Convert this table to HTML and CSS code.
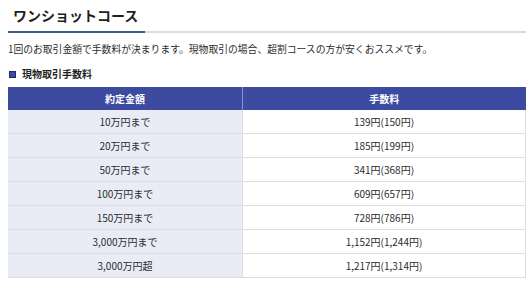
FILE: index.html
```html
<!DOCTYPE html>
<html lang="ja">
<head>
<meta charset="utf-8">
<link rel="stylesheet" href="styles.css">
</head>
<body>
<div class="page">
  <h2 class="title">ワンショットコース</h2>
  <p class="lead">1回のお取引金額で手数料が決まります。現物取引の場合、超割コースの方が安くおススメです。</p>
  <h3 class="sub"><span class="sq"></span>現物取引手数料</h3>
  <table class="fees">
    <thead>
      <tr><th class="c1">約定金額</th><th class="c2">手数料</th></tr>
    </thead>
    <tbody>
      <tr><td class="c1">10万円まで</td><td class="c2">139円(150円)</td></tr>
      <tr><td class="c1">20万円まで</td><td class="c2">185円(199円)</td></tr>
      <tr><td class="c1">50万円まで</td><td class="c2">341円(368円)</td></tr>
      <tr><td class="c1">100万円まで</td><td class="c2">609円(657円)</td></tr>
      <tr><td class="c1">150万円まで</td><td class="c2">728円(786円)</td></tr>
      <tr><td class="c1">3,000万円まで</td><td class="c2">1,152円(1,244円)</td></tr>
      <tr><td class="c1">3,000万円超</td><td class="c2">1,217円(1,314円)</td></tr>
    </tbody>
  </table>
</div>
</body>
</html>
```
FILE: styles.css
```css
html, body {
  margin: 0;
  padding: 0;
  background: #fff;
}
body {
  font-family: "Noto Sans CJK JP", "Noto Sans", sans-serif;
  color: #2b2b2b;
}
.page {
  padding: 0 6px 0 8px;
}
.title {
  margin: 0;
  padding: 4px 0 5px 5px;
  font-size: 14px;
  line-height: 22px;
  font-weight: 700;
  color: #1e1e1e;
  border-bottom: 2px solid #ddd;
  position: relative;
}
.title::after {
  content: "";
  position: absolute;
  left: 0;
  bottom: -2px;
  width: 137px;
  height: 2px;
  background: #3d5a8f;
}
.lead {
  margin: 9px 0 0;
  font-size: 9.8px;
  line-height: 14px;
}
.sub {
  margin: 11px 0 0;
  display: flex;
  align-items: center;
  gap: 6px;
  font-size: 10px;
  line-height: 14px;
  font-weight: 700;
  color: #1e1e1e;
}
.sq {
  width: 5px;
  height: 5px;
  background: #3c4aa0;
  border: 1px solid #1f2a6a;
  margin-left: 1px;
}
.fees {
  margin-top: 6px;
  width: 518px;
  border-collapse: collapse;
  font-size: 10px;
}
.fees th {
  background: #3c4aa0;
  color: #fff;
  font-weight: 700;
  height: 23px;
  padding: 0;
  border-right: 1px solid #8a93c9;
}
.fees th:last-child {
  border-right: none;
}
.fees td {
  height: 23px;
  padding: 0;
  text-align: center;
  border: 1px solid #ddd;
  border-top: none;
}
.fees .c1 {
  width: 234px;
}
.fees td.c1 {
  background: #e9ebf6;
  border-left: none;
}
.fees td.c2 {
  background: #fff;
}
```
